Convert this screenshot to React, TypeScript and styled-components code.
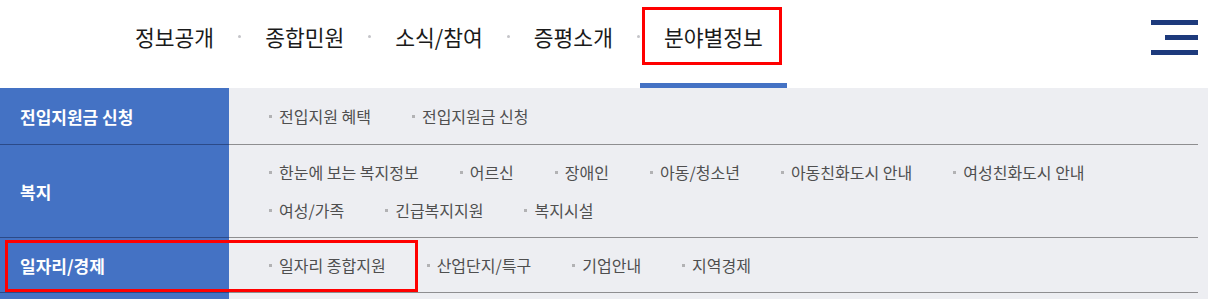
import * as React from "react";
import styled, { createGlobalStyle } from "styled-components";

interface ICategory {
  title: string;
  items: string[];
  minHeight?: number;
}

const navItems = ["정보공개", "종합민원", "소식/참여", "증평소개", "분야별정보"];

const categories: ICategory[] = [
  { title: "전입지원금 신청", items: ["전입지원 혜택", "전입지원금 신청"], minHeight: 57 },
  {
    title: "복지",
    items: [
      "한눈에 보는 복지정보",
      "어르신",
      "장애인",
      "아동/청소년",
      "아동친화도시 안내",
      "여성친화도시 안내",
      "여성/가족",
      "긴급복지지원",
      "복지시설"
    ]
  },
  { title: "일자리/경제", items: ["일자리 종합지원", "산업단지/특구", "기업안내", "지역경제"] },
  // next group starts right at the bottom edge, only its top strip shows
  { title: "", items: [], minHeight: 54 }
];

/// Styles

const GlobalStyle = createGlobalStyle`
  html, body {
    margin: 0;
    padding: 0;
    background: #ffffff;
    font-family: "Noto Sans CJK KR", "Noto Sans", sans-serif;
    overflow: hidden;
  }
`;

const Page = styled.div`
  position: relative;
  width: 1208px;
`;

const Header = styled.header`
  display: flex;
  align-items: stretch;
  height: 88px;
  padding-left: 111px;
  padding-right: 10px;
  box-sizing: border-box;
`;

const NavList = styled.nav`
  display: flex;
  align-items: stretch;
`;

const NavItem = styled.a<{ $active?: boolean }>`
  display: block;
  padding: 21px 24px 0;
  font-size: 21.5px;
  line-height: 32px;
  color: #1a1a1a;
  text-decoration: none;
  box-shadow: ${p => (p.$active ? "inset 0 -5px 0 #4472c4" : "none")};
`;

const NavDot = styled.span`
  align-self: flex-start;
  width: 3px;
  height: 3px;
  margin-top: 35px;
  border-radius: 50%;
  background: #c4c4c8;
`;

const MenuButton = styled.button`
  margin-left: auto;
  display: flex;
  flex-direction: column;
  align-items: flex-end;
  gap: 10px;
  width: 47px;
  padding: 20px 0 0;
  border: none;
  background: none;
`;

const MenuBar = styled.span<{ $short?: boolean }>`
  display: block;
  width: ${p => (p.$short ? "33px" : "47px")};
  height: 5px;
  background: #1d3a7c;
`;

const Board = styled.div`
  background: #edeef2;
  padding-right: 10px;
`;

const Row = styled.div<{ $minHeight?: number }>`
  display: grid;
  grid-template-columns: 229px 1fr;
  min-height: ${p => (p.$minHeight ? `${p.$minHeight}px` : "0")};
`;

const Label = styled.div`
  display: flex;
  align-items: center;
  padding-left: 20px;
  background: #4472c4;
  border-bottom: 1px solid #2b4a88;
  color: #ffffff;
  font-size: 17px;
  font-weight: 700;
`;

const Links = styled.ul`
  display: flex;
  flex-wrap: wrap;
  align-content: center;
  column-gap: 41px;
  margin: 0;
  padding: 8px 20px 8px 40px;
  list-style: none;
  border-bottom: 1px solid #8e8e90;
`;

const LinkItem = styled.li`
  position: relative;
  padding-left: 10px;
  font-size: 16px;
  line-height: 38px;
  color: #4f4f4f;

  &::before {
    content: "";
    position: absolute;
    left: 0;
    top: 18px;
    width: 3px;
    height: 3px;
    background: #b2b2b4;
  }
`;

const Highlight = styled.div<{ $x: number; $y: number; $w: number; $h: number }>`
  position: absolute;
  left: ${p => p.$x}px;
  top: ${p => p.$y}px;
  width: ${p => p.$w}px;
  height: ${p => p.$h}px;
  border: 3px solid #ff0000;
  box-sizing: border-box;
  pointer-events: none;
`;

/// Component

export default function App() {
  return (
    <Page>
      <GlobalStyle />
      <Header>
        <NavList>
          {navItems.map((n, i) => (
            <React.Fragment key={n}>
              {i > 0 && <NavDot />}
              <NavItem href="#" $active={i === navItems.length - 1}>
                {n}
              </NavItem>
            </React.Fragment>
          ))}
        </NavList>
        <MenuButton aria-label="전체메뉴">
          <MenuBar />
          <MenuBar $short />
          <MenuBar />
        </MenuButton>
      </Header>
      <Board>
        {categories.map((c, i) => (
          <Row key={i} $minHeight={c.minHeight}>
            <Label>{c.title}</Label>
            <Links>
              {c.items.map(itm => (
                <LinkItem key={itm}>{itm}</LinkItem>
              ))}
            </Links>
          </Row>
        ))}
      </Board>
      <Highlight $x={642} $y={7} $w={140} $h={58} />
      <Highlight $x={5} $y={240} $w={413} $h={52} />
    </Page>
  );
}
